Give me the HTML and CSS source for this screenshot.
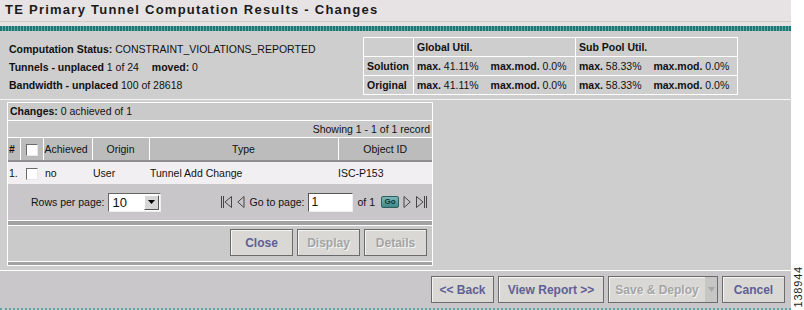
FILE: index.html
```html
<!DOCTYPE html>
<html lang="en">
<head>
    <meta charset="UTF-8">
    <title>TE Primary Tunnel Computation Results - Changes</title>
    <link rel="stylesheet" href="styles.css">
</head>
<body>
    <div class="screen">
        <div class="app">
            <div class="titlebar">
                <h1>TE Primary Tunnel Computation Results - Changes</h1>
            </div>
            <div class="stripe"></div>

            <div class="summary">
                <div class="status">
                    <p><b>Computation Status:</b> CONSTRAINT_VIOLATIONS_REPORTED</p>
                    <p><b>Tunnels - unplaced</b> 1 of 24 <b class="moved">moved:</b> 0</p>
                    <p><b>Bandwidth - unplaced</b> 100 of 28618</p>
                </div>
                <table class="util">
                    <colgroup>
                        <col class="util-label">
                        <col class="util-col">
                        <col class="util-col">
                    </colgroup>
                    <tr>
                        <th></th>
                        <th>Global Util.</th>
                        <th>Sub Pool Util.</th>
                    </tr>
                    <tr>
                        <th>Solution</th>
                        <td><b>max.</b> 41.11% <span class="mod"><b>max.mod.</b> 0.0%</span></td>
                        <td><b>max.</b> 58.33% <span class="mod"><b>max.mod.</b> 0.0%</span></td>
                    </tr>
                    <tr>
                        <th>Original</th>
                        <td><b>max.</b> 41.11% <span class="mod"><b>max.mod.</b> 0.0%</span></td>
                        <td><b>max.</b> 58.33% <span class="mod"><b>max.mod.</b> 0.0%</span></td>
                    </tr>
                </table>
            </div>

            <div class="workarea">
                <div class="changes">
                    <div class="changes-head"><b>Changes:</b> 0 achieved of 1</div>
                    <div class="record-count">Showing 1 - 1 of 1 record</div>
                    <table class="grid">
                        <thead>
                            <tr>
                                <th class="c-num">#</th>
                                <th class="c-check"><span class="checkbox"></span></th>
                                <th class="c-achieved">Achieved</th>
                                <th class="c-origin">Origin</th>
                                <th class="c-type">Type</th>
                                <th class="c-object">Object ID</th>
                            </tr>
                        </thead>
                        <tbody>
                            <tr>
                                <td>1.</td>
                                <td class="c-check"><span class="checkbox"></span></td>
                                <td>no</td>
                                <td>User</td>
                                <td>Tunnel Add Change</td>
                                <td>ISC-P153</td>
                            </tr>
                        </tbody>
                    </table>

                    <div class="pager">
                        <div class="rows-per-page">
                            <span>Rows per page:</span>
                            <div class="select">
                                <span class="select-value">10</span>
                                <span class="select-button">
                                    <svg width="7" height="4" viewBox="0 0 7 4"><path d="M0 0h7L3.5 4z" fill="#000"/></svg>
                                </span>
                            </div>
                        </div>
                        <div class="goto">
                            <svg class="nav" width="13" height="14" viewBox="0 0 13 14">
                                <path d="M1.5 1v12M3.5 1v12" stroke="#444" fill="none"/>
                                <path d="M11.5 1.5L5 7l6.5 5.5z" stroke="#444" fill="none"/>
                            </svg>
                            <svg class="nav" width="8" height="14" viewBox="0 0 8 14">
                                <path d="M7 1.5L0.8 7 7 12.5z" stroke="#444" fill="none"/>
                            </svg>
                            <span class="goto-label">Go to page:</span>
                            <span class="page-input">1</span>
                            <span>of 1</span>
                            <span class="go">Go</span>
                            <svg class="nav" width="8" height="14" viewBox="0 0 8 14">
                                <path d="M1 1.5L7.2 7 1 12.5z" stroke="#444" fill="none"/>
                            </svg>
                            <svg class="nav" width="13" height="14" viewBox="0 0 13 14">
                                <path d="M1.5 1.5L8 7l-6.5 5.5z" stroke="#444" fill="none"/>
                                <path d="M9.5 1v12M11.5 1v12" stroke="#444" fill="none"/>
                            </svg>
                        </div>
                    </div>

                    <div class="panel-actions">
                        <button class="btn">Close</button>
                        <button class="btn" disabled>Display</button>
                        <button class="btn" disabled>Details</button>
                    </div>
                    <div class="panel-foot"></div>
                </div>
            </div>

            <div class="footer">
                <button class="btn btn-back">&lt;&lt; Back</button>
                <button class="btn btn-report">View Report &gt;&gt;</button>
                <button class="btn btn-split" disabled>
                    <span class="split-label">Save &amp; Deploy</span>
                    <span class="split-arrow">
                        <svg width="7" height="5" viewBox="0 0 7 5"><path d="M0 0h7L3.5 5z" fill="#a8a8a8"/></svg>
                    </span>
                </button>
                <button class="btn btn-cancel">Cancel</button>
            </div>
        </div>
        <div class="stamp"><span>138944</span></div>
    </div>
</body>
</html>
```

FILE: styles.css
```css
* {
    margin: 0;
    padding: 0;
    box-sizing: border-box;
}

body {
    font-family: 'Liberation Sans', Arial, sans-serif;
    font-size: 10.5px;
    color: #111;
    background: #fff;
}

.screen {
    display: flex;
    width: 804px;
    height: 310px;
}

.app {
    width: 791px;
    flex: none;
    display: flex;
    flex-direction: column;
    background: #cecece;
}

/* title */
.titlebar {
    height: 22px;
    background: #e7e3e5;
    border-bottom: 1px solid #d2cac2;
    padding-left: 5px;
}

.titlebar h1 {
    font-size: 13px;
    font-weight: bold;
    letter-spacing: 1.25px;
    line-height: 20px;
    color: #1a1a1a;
}

.stripe {
    height: 9px;
    border-top: 4px solid #e7e3e5;
    background: repeating-linear-gradient(90deg, #1d7673 0 2px, #64aaa6 2px 3px);
}

/* summary */
.summary {
    height: 69px;
    display: flex;
    align-items: flex-start;
    border-bottom: 1px solid #f4f4f4;
}

.status {
    width: 363px;
    padding: 9px 0 0 9px;
}

.status p {
    line-height: 18px;
}

.moved {
    margin-left: 10px;
}

.util {
    margin-top: 6px;
    width: 375px;
    table-layout: fixed;
    border-collapse: collapse;
    border: 1px solid #fff;
}

.util .util-label {
    width: 50px;
}

.util .util-col {
    width: 162px;
}

.util th,
.util td {
    border: 1px solid #fff;
    height: 19px;
    padding: 0 3px;
    text-align: left;
    white-space: nowrap;
    overflow: hidden;
}

.util th {
    font-weight: bold;
}

.util .mod {
    margin-left: 9px;
}

/* changes panel */
.workarea {
    height: 168px;
    padding: 2px 0 0 7px;
}

.changes {
    width: 426px;
    border: 1px solid #fff;
    background: #cacaca;
}

.changes-head {
    height: 18px;
    line-height: 17px;
    padding-left: 2px;
    border-bottom: 1px solid #fff;
}

.record-count {
    height: 17px;
    line-height: 16px;
    text-align: right;
    padding-right: 2px;
    border-bottom: 1px solid #fff;
}

.grid {
    width: 100%;
    border-collapse: collapse;
}

.grid th {
    height: 23px;
    background: #bcbcbc;
    font-weight: normal;
    border-left: 1px solid #fff;
    border-bottom: 2px solid #8e8e8e;
}

.grid th:first-child {
    border-left: none;
    font-weight: bold;
    text-align: left;
    padding-left: 1px;
}

.grid td {
    height: 23px;
    background: #f1eff1;
    text-align: left;
}

.grid .c-num { width: 12px; }
.grid .c-check { width: 23px; text-align: center; }
.grid .c-achieved { width: 49px; }
.grid .c-origin { width: 57px; }
.grid .c-type { width: 189px; }

.grid th.c-achieved {
    text-align: left;
    padding-left: 1px;
}

.grid td:first-child {
    padding-left: 1px;
}

.grid td:nth-child(3) {
    padding-left: 2px;
}

.grid td:nth-child(4),
.grid td:nth-child(5) {
    padding-left: 1px;
}

.checkbox {
    display: inline-block;
    width: 12px;
    height: 12px;
    vertical-align: middle;
    background: #fff;
    border-top: 1px solid #6a6a6a;
    border-left: 1px solid #6a6a6a;
    border-right: 1px solid #e8e8e8;
    border-bottom: 1px solid #e8e8e8;
}

/* pager */
.pager {
    height: 37px;
    display: flex;
    align-items: center;
    justify-content: space-between;
    padding: 0 4px 0 23px;
    background: #c8c6c8;
    border-bottom: 1px solid #fff;
}

.rows-per-page {
    display: flex;
    align-items: center;
    gap: 3px;
}

.select {
    display: flex;
    align-items: center;
    width: 53px;
    height: 19px;
    background: #fff;
    border-top: 1px solid #666;
    border-left: 1px solid #666;
    border-right: 1px solid #eee;
    border-bottom: 1px solid #eee;
}

.select-value {
    flex: 1;
    font-size: 13px;
    padding-left: 4px;
}

.select-button {
    width: 15px;
    height: 15px;
    margin-right: 1px;
    display: flex;
    align-items: center;
    justify-content: center;
    background: #d6d6d6;
    border: 1px solid;
    border-color: #fff #555 #555 #fff;
}

.goto {
    display: flex;
    align-items: center;
    gap: 4px;
}

.goto-label {
    margin-left: 1px;
}

.page-input {
    width: 45px;
    height: 19px;
    font-size: 12px;
    line-height: 17px;
    padding-left: 2px;
    background: #fff;
    border-top: 1px solid #555;
    border-left: 1px solid #555;
    border-right: 1px solid #eee;
    border-bottom: 1px solid #eee;
}

.go {
    width: 18px;
    height: 12px;
    margin-left: 2px;
    border-radius: 2px;
    background: linear-gradient(#7fb8b8, #3f8686);
    border: 1px solid #2e5e5e;
    color: #0d3232;
    font-size: 8px;
    font-weight: bold;
    line-height: 10px;
    text-align: center;
}

/* panel buttons */
.panel-actions {
    height: 41px;
    display: flex;
    justify-content: flex-end;
    align-items: center;
    gap: 4px;
    padding: 0 5px 1px 0;
    border-top: 4px solid #a2a2a2;
    border-bottom: 1px solid #fff;
    box-shadow: inset 0 1px 0 #fff;
}

.panel-foot {
    height: 3px;
    background: #a2a2a2;
}

.btn {
    height: 27px;
    width: 63px;
    font-family: 'Liberation Sans', Arial, sans-serif;
    font-size: 12px;
    font-weight: bold;
    color: #5f5f96;
    background: #d9d8d4;
    border: 1px solid #6b6b6b;
    box-shadow: inset 1px 1px 0 #f4f4f2;
}

.btn:disabled {
    color: #a4a4a4;
    text-shadow: 1px 1px 0 #f4f4f4;
}

/* footer */
.footer {
    height: 40px;
    display: flex;
    justify-content: flex-end;
    align-items: center;
    gap: 4px;
    padding-right: 6px;
    margin-top: auto;
    border-top: 1px solid #fff;
    border-bottom: 2px dotted #5aa8a4;
    background: #c9c7c9;
}

.btn-back {
    width: 63px;
}

.btn-report {
    width: 106px;
}

.btn-split {
    width: 110px;
    display: flex;
    align-items: stretch;
    padding: 0;
}

.split-label {
    flex: 1;
    display: flex;
    align-items: center;
    justify-content: center;
}

.split-arrow {
    width: 12px;
    display: flex;
    align-items: center;
    justify-content: center;
    background: #c6c6c4;
}

/* figure number */
.stamp {
    flex: 1;
    display: flex;
    align-items: flex-end;
    justify-content: flex-end;
    padding-bottom: 2px;
}

.stamp span {
    writing-mode: vertical-rl;
    transform: rotate(180deg);
    font-size: 11px;
    line-height: 1;
    letter-spacing: 0.8px;
    color: #222;
}
```
